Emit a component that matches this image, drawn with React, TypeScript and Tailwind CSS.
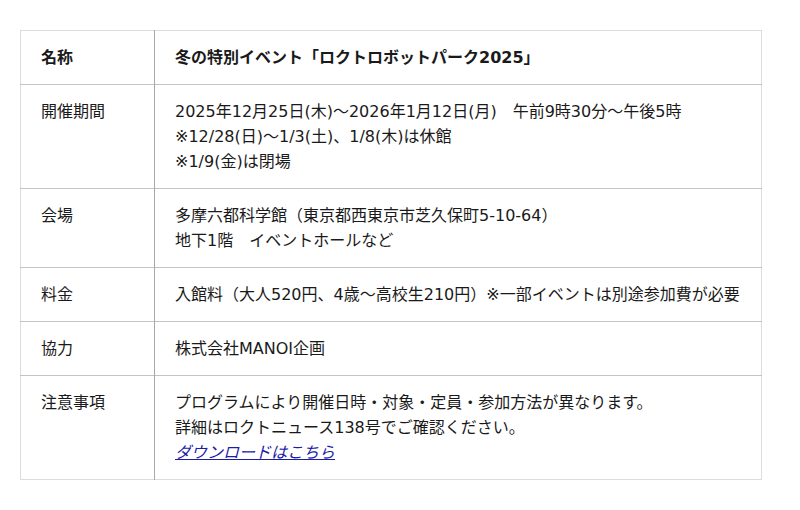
const rows: { label: string; bold?: boolean; lines: React.ReactNode[] }[] = [
  { label: '名称', bold: true, lines: ['冬の特別イベント「ロクトロボットパーク2025」'] },
  {
    label: '開催期間',
    lines: [
      '2025年12月25日(木)～2026年1月12日(月)　午前9時30分～午後5時',
      '※12/28(日)～1/3(土)、1/8(木)は休館',
      '※1/9(金)は閉場',
    ],
  },
  {
    label: '会場',
    lines: ['多摩六都科学館（東京都西東京市芝久保町5-10-64）', '地下1階　イベントホールなど'],
  },
  { label: '料金', lines: ['入館料（大人520円、4歳～高校生210円）※一部イベントは別途参加費が必要'] },
  { label: '協力', lines: ['株式会社MANOI企画'] },
  {
    label: '注意事項',
    lines: [
      'プログラムにより開催日時・対象・定員・参加方法が異なります。',
      '詳細はロクトニュース138号でご確認ください。',
      <a key="dl" href="#" className="italic text-[#1c1ca8] underline">
        ダウンロードはこちら
      </a>,
    ],
  },
]

export default function App() {
  return (
    <div className="min-h-[510px] bg-white pt-[30px] pl-[20px] font-['DejaVu_Sans','Noto_Sans_CJK_JP',sans-serif] text-[16px] leading-[25px] text-[#1a1a1a]">
      <table className="w-[742px] border-collapse border border-[#dcdcdc]">
        <tbody>
          {rows.map((row, i) => (
            <tr key={i} className={i > 0 ? 'border-t border-[#c4c4c4]' : ''}>
              <th
                className={`w-[134px] border-r border-[#a8a8a8] px-[20px] py-[14px] text-left align-top ${
                  row.bold ? 'font-bold' : 'font-normal'
                }`}
              >
                {row.label}
              </th>
              <td className={`px-[20px] py-[14px] align-top ${row.bold ? 'font-bold' : ''}`}>
                {row.lines.map((line, j) => (
                  <div key={j}>{line}</div>
                ))}
              </td>
            </tr>
          ))}
        </tbody>
      </table>
    </div>
  )
}
